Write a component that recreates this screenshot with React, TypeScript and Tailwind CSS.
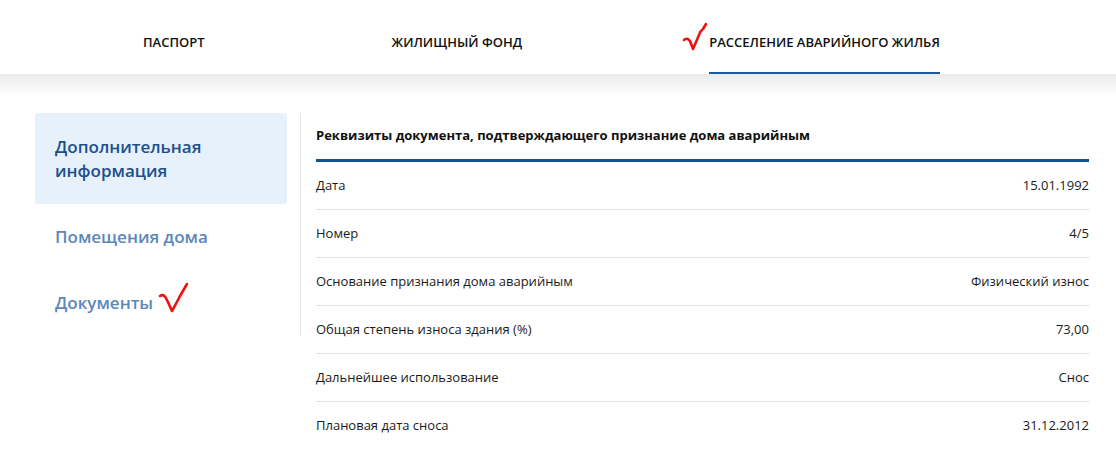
const tabs = [
  { label: "ПАСПОРТ", active: false },
  { label: "ЖИЛИЩНЫЙ ФОНД", active: false },
  { label: "РАССЕЛЕНИЕ АВАРИЙНОГО ЖИЛЬЯ", active: true },
];

const rows = [
  { name: "Дата", value: "15.01.1992" },
  { name: "Номер", value: "4/5" },
  { name: "Основание признания дома аварийным", value: "Физический износ" },
  { name: "Общая степень износа здания (%)", value: "73,00" },
  { name: "Дальнейшее использование", value: "Снос" },
  { name: "Плановая дата сноса", value: "31.12.2012" },
];

function TabCheck() {
  return (
    <svg
      className="absolute right-full top-[22px] mr-[1px]"
      width="26"
      height="30"
      viewBox="0 0 26 30"
      fill="none"
    >
      <path
        d="M2 18 Q5 15 8 19 L11 27 Q14 20 17 13 Q18 9 21 7 L24 2"
        stroke="#f01010"
        strokeWidth="2.6"
        strokeLinecap="round"
        strokeLinejoin="round"
      />
    </svg>
  );
}

function NavCheck() {
  return (
    <svg className="ml-[5px] -mt-[10px]" width="32" height="32" viewBox="0 0 32 32" fill="none">
      <path
        d="M2 14 Q6 11 9 18 L14 29 Q19 20 22 14 L29 2"
        stroke="#f01010"
        strokeWidth="2.6"
        strokeLinecap="round"
        strokeLinejoin="round"
      />
    </svg>
  );
}

export default function App() {
  return (
    <div className="min-h-[468px] w-[1116px] bg-white font-['Open_Sans',sans-serif]">
      <header className="flex h-[74px] gap-[187px] bg-white pl-[143px]">
        {tabs.map((tab) => (
          <div
            key={tab.label}
            className={`relative h-full pt-[33px] text-[13px] font-semibold leading-[18px] text-[#111] ${
              tab.active ? "border-b-2 border-[#1b5c9c]" : ""
            }`}
          >
            {tab.active && <TabCheck />}
            {tab.label}
          </div>
        ))}
      </header>
      <div className="h-[22px] bg-gradient-to-b from-[#ebebeb] to-white" />

      <main className="flex pl-[35px] pt-[17px]">
        <aside className="w-[266px] self-start border-r border-[#e6e6e6] pr-[13px]">
          <div className="rounded-[3px] bg-[#e6f1fc] px-5 pb-[21px] pt-[22px] text-[17px] font-semibold leading-6 text-[#1d4f8d]">
            Дополнительная
            <br />
            информация
          </div>
          <div className="px-5 py-[21px] text-[17px] font-semibold leading-6 text-[#5b87b9]">
            Помещения дома
          </div>
          <div className="flex items-center px-5 py-[21px] text-[17px] font-semibold leading-6 text-[#5b87b9]">
            Документы
            <NavCheck />
          </div>
        </aside>

        <section className="ml-[15px] w-[773px]">
          <div className="flex h-[49px] items-center border-b-[3px] border-[#0f5596] text-[13px] font-bold text-[#111]">
            Реквизиты документа, подтверждающего признание дома аварийным
          </div>
          {rows.map((row, i) => (
            <div
              key={row.name}
              className={`flex h-[47px] items-center justify-between text-[13px] text-[#1a1a1a] ${
                i > 0 ? "h-[48px] border-t border-[#e0e0e0]" : ""
              }`}
            >
              <span>{row.name}</span>
              <span>{row.value}</span>
            </div>
          ))}
        </section>
      </main>
    </div>
  );
}
